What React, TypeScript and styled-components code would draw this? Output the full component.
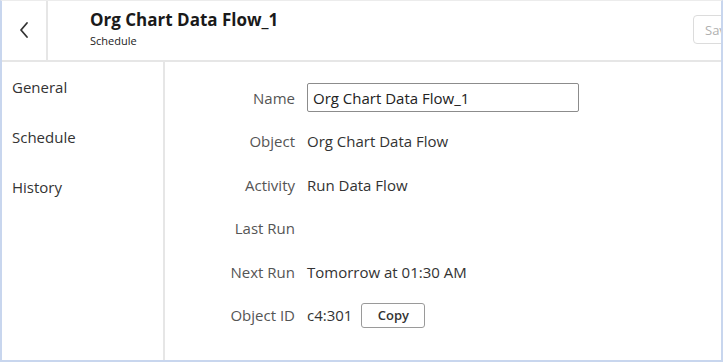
import React from "react";
import styled, { createGlobalStyle } from "styled-components";

const GlobalStyle = createGlobalStyle`
  html, body {
    margin: 0;
    padding: 0;
    background: #ffffff;
  }
  body {
    font-family: "Open Sans", "Noto Sans", sans-serif;
    color: #333333;
  }
`;

type FieldType = {
  label: string;
  value?: string;
  kind?: "text" | "input" | "copy";
};

const fields: Array<FieldType> = [
  { label: "Name", value: "Org Chart Data Flow_1", kind: "input" },
  { label: "Object", value: "Org Chart Data Flow" },
  { label: "Activity", value: "Run Data Flow" },
  { label: "Last Run" },
  { label: "Next Run", value: "Tomorrow at 01:30 AM" },
  { label: "Object ID", value: "c4:301", kind: "copy" },
];

const navItems = ["General", "Schedule", "History"];

const App: React.FC = () => {
  return (
    <>
      <GlobalStyle />
      <Frame>
        <Header>
          <BackCell>
            <svg width="12" height="18" viewBox="0 0 12 18">
              <path
                d="M9 2 L3 9 L9 16"
                fill="none"
                stroke="#333"
                strokeWidth="1.8"
                strokeLinecap="round"
                strokeLinejoin="round"
              />
            </svg>
          </BackCell>
          <TitleBlock>
            <Title>Org Chart Data Flow_1</Title>
            <Subtitle>Schedule</Subtitle>
          </TitleBlock>
          <SaveButton disabled>Save</SaveButton>
        </Header>
        <Body>
          <Sidebar>
            {navItems.map((item) => (
              <NavItem key={item}>{item}</NavItem>
            ))}
          </Sidebar>
          <Content>
            {fields.map((field) => (
              <Row key={field.label}>
                <Label>{field.label}</Label>
                <Value>
                  {field.kind === "input" ? (
                    <NameInput defaultValue={field.value} />
                  ) : (
                    <span>{field.value}</span>
                  )}
                  {field.kind === "copy" && <CopyButton>Copy</CopyButton>}
                </Value>
              </Row>
            ))}
          </Content>
        </Body>
      </Frame>
    </>
  );
};

const Frame = styled.div`
  width: 723px;
  height: 362px;
  box-sizing: border-box;
  border-top: 1px solid #ececec;
  border-left: 2px solid #c8d6ee;
  border-right: 2px solid #c8d6ee;
  border-bottom: 2px solid #c8d6ee;
  display: flex;
  flex-direction: column;
  overflow: hidden;
`;

const Header = styled.div`
  height: 59px;
  flex-shrink: 0;
  display: flex;
  align-items: stretch;
  border-bottom: 2px solid #e6e6e6;
`;

const BackCell = styled.div`
  width: 44px;
  border-right: 2px solid #e6e6e6;
  display: flex;
  align-items: center;
  justify-content: center;
  padding-bottom: 2px;
`;

const TitleBlock = styled.div`
  flex-grow: 1;
  padding-left: 42px;
  padding-top: 8px;
  display: flex;
  flex-direction: column;
`;

const Title = styled.div`
  font-size: 17px;
  font-weight: 700;
  color: #1a1a1a;
  line-height: 22px;
`;

const Subtitle = styled.div`
  font-size: 11px;
  color: #222;
  line-height: 16px;
  margin-top: 2px;
`;

const SaveButton = styled.button`
  align-self: flex-start;
  margin-top: 14px;
  margin-right: -40px;
  width: 68px;
  height: 29px;
  border: 1px solid #dcdcdc;
  border-radius: 4px;
  background: #fff;
  color: #b0b0b0;
  font-family: "Open Sans", sans-serif;
  font-size: 13px;
  text-align: left;
  padding-left: 11px;
`;

const Body = styled.div`
  flex-grow: 1;
  display: flex;
`;

const Sidebar = styled.div`
  width: 163px;
  flex-shrink: 0;
  border-right: 2px solid #e6e6e6;
  padding-left: 10px;
  box-sizing: border-box;
`;

const NavItem = styled.div`
  height: 50px;
  display: flex;
  align-items: center;
  font-size: 15px;
  color: #333;
`;

const Content = styled.div`
  flex-grow: 1;
  padding-top: 14px;
  display: flex;
  flex-direction: column;
`;

const Row = styled.div`
  height: 43.5px;
  display: grid;
  grid-template-columns: 130px 1fr;
  column-gap: 12px;
  align-items: center;
  font-size: 15px;
`;

const Label = styled.div`
  text-align: right;
  color: #555;
`;

const Value = styled.div`
  display: flex;
  align-items: center;
  gap: 6px;
  color: #333;
`;

const NameInput = styled.input`
  width: 272px;
  height: 29px;
  box-sizing: border-box;
  border: 1px solid #8c8c8c;
  border-radius: 2px;
  padding: 0 5px;
  font-family: "Open Sans", sans-serif;
  font-size: 15px;
  color: #222;
  outline: none;
`;

const CopyButton = styled.button`
  width: 64px;
  height: 25px;
  margin-left: 3px;
  border: 1px solid #9a9a9a;
  border-radius: 3px;
  background: #fff;
  font-family: "Open Sans", sans-serif;
  font-size: 13px;
  font-weight: 600;
  color: #333;
  padding: 0;
`;

export default App;
